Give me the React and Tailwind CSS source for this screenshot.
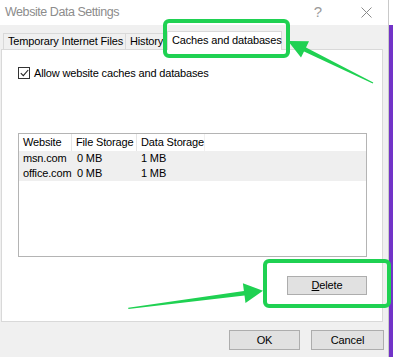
import React from 'react';

const rows = [
  { site: 'msn.com', file: '0 MB', data: '1 MB' },
  { site: 'office.com', file: '0 MB', data: '1 MB' },
];

function TitleBar() {
  return (
    <div className="flex h-[25px] items-center bg-white pl-[5px]">
      <span className="text-[12.5px] tracking-[-0.45px] text-[#8c8c8c]">Website Data Settings</span>
      <span className="ml-auto text-[15px] text-[#9a9a9a]">?</span>
      <svg width="11" height="11" viewBox="0 0 11 11" className="ml-[39px] mr-[16px]">
        <path d="M0.5 0.5 L10.5 10.5 M10.5 0.5 L0.5 10.5" stroke="#8a8a8a" strokeWidth="1" />
      </svg>
    </div>
  );
}

function Tabs() {
  return (
    <div className="flex h-[24px] items-end whitespace-nowrap pl-[3px]">
      <div className="flex h-[16px] w-[122px] items-center border-l border-t border-[#d9d9d9] px-[4px]">
        Temporary Internet Files
      </div>
      <div className="flex h-[16px] w-[42px] items-center border-l border-t border-[#d9d9d9] px-[4px]">
        History
      </div>
      <div className="relative z-10 -mb-px flex h-[19px] w-[115px] items-center border-x border-t border-[#d9d9d9] bg-white px-[4px] pb-[2px]">
        Caches and databases
      </div>
    </div>
  );
}

function Panel() {
  return (
    <div className="ml-[1px] mr-[5px] flex h-[273px] flex-col border border-[#d9d9d9] bg-white pl-[16px] pt-[17px]">
      <label className="flex h-[12px] items-center gap-[4px]">
        <span className="flex h-[12px] w-[12px] items-center justify-center border border-[#333333] bg-white">
          <svg width="9" height="8" viewBox="0 0 9 8">
            <path d="M0.8 4.2 L3.3 6.6 L8.2 1" fill="none" stroke="#222" strokeWidth="1.1" />
          </svg>
        </span>
        <span>Allow website caches and databases</span>
      </label>

      <div className="mt-[54px] flex h-[124px] w-[349px] flex-col whitespace-nowrap border border-[#b4b4b4] bg-white">
        <div className="flex h-[17px] items-center">
          <div className="flex h-full w-[53px] items-center border-r border-[#e5e5e5] pl-[4px]">Website</div>
          <div className="flex h-full w-[65px] items-center border-r border-[#e5e5e5] pl-[4px]">File Storage</div>
          <div className="flex h-full w-[68px] items-center border-r border-[#f0f0f0] pl-[4px]">Data Storage</div>
        </div>
        {rows.map((r) => (
          <div key={r.site} className="flex h-[15px] items-center bg-[#efefef]">
            <div className="w-[53px] pl-[4px]">{r.site}</div>
            <div className="w-[65px] pl-[5px]">{r.file}</div>
            <div className="pl-[4px]">{r.data}</div>
          </div>
        ))}
      </div>

      <div className="mt-[19px] flex w-[349px] justify-end">
        <button className="h-[19px] w-[80px] border border-[#adadad] bg-[#e1e1e1]">
          <span className="underline">D</span>elete
        </button>
      </div>
    </div>
  );
}

function Footer() {
  return (
    <div className="flex flex-1 items-start justify-end gap-[11px] pr-[4px] pt-[8px]">
      <button className="h-[20px] w-[71px] border border-[#adadad] bg-[#e1e1e1]">OK</button>
      <button className="h-[20px] w-[73px] border border-[#adadad] bg-[#e1e1e1]">Cancel</button>
    </div>
  );
}

// зелёные рамки и стрелки поверх скриншота
function Annotations() {
  const green = '#1fd152';
  return (
    <svg className="pointer-events-none absolute left-0 top-0" width="393" height="357" viewBox="0 0 393 357">
      <rect x="165" y="21" width="123" height="35" rx="4" fill="none" stroke={green} strokeWidth="4" />
      <rect x="265" y="261" width="124" height="45" rx="4" fill="none" stroke={green} strokeWidth="4" />
      <polygon
        fill={green}
        points="288,41 309,41.3 306,47.4 373.3,82.5 372.7,83.5 304,51.4 301,57.5"
      />
      <polygon
        fill={green}
        points="263,290.7 242.9,283.3 243.9,291 128.2,307.7 128.4,308.9 244.5,295.4 245.5,303.1"
      />
    </svg>
  );
}

export default function App() {
  return (
    <div className="relative flex h-[357px] w-[393px] overflow-hidden bg-white font-['Liberation_Sans',Arial,sans-serif] text-[11px] tracking-[-0.15px] text-black">
      <div className="flex h-full w-[389px] flex-col border-r border-[#c9c9c9]">
        <TitleBar />
        <div className="flex flex-1 flex-col bg-[#f0f0f0]">
          <Tabs />
          <Panel />
          <Footer />
        </div>
      </div>
      <div className="flex w-[4px] flex-col">
        <div className="h-[25px] bg-white" />
        <div className="flex-1 bg-[#7233c8]" />
      </div>
      <Annotations />
    </div>
  );
}
